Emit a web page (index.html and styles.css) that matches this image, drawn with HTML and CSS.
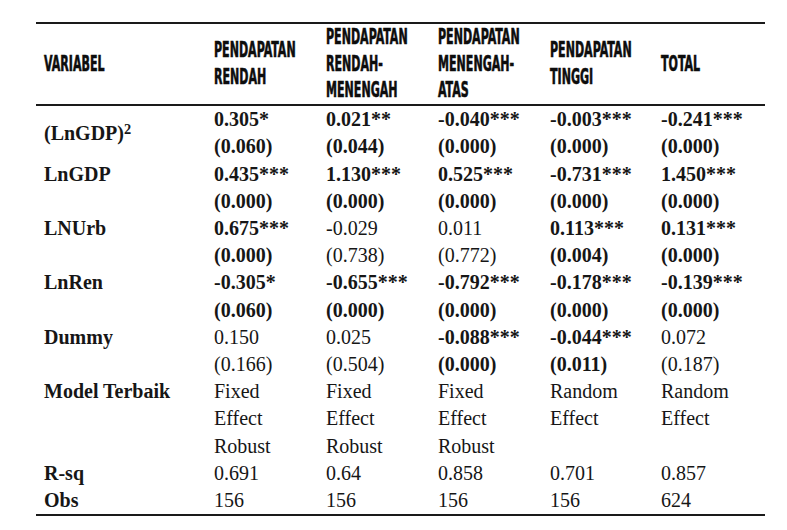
FILE: index.html
```html
<!DOCTYPE html>
<html lang="id">
<head>
<meta charset="utf-8">
<title>Tabel Regresi</title>
<link rel="stylesheet" href="styles.css">
</head>
<body>
<div class="page">
<table class="reg">
  <colgroup>
    <col class="c-var"><col class="c-num"><col class="c-num"><col class="c-num"><col class="c-num4"><col class="c-num">
  </colgroup>
  <thead>
    <tr>
      <th><span class="hd">VARIABEL</span></th>
      <th><span class="hd">PENDAPATAN<br>RENDAH</span></th>
      <th><span class="hd">PENDAPATAN<br>RENDAH-<br>MENENGAH</span></th>
      <th><span class="hd">PENDAPATAN<br>MENENGAH-<br>ATAS</span></th>
      <th><span class="hd">PENDAPATAN<br>TINGGI</span></th>
      <th><span class="hd">TOTAL</span></th>
    </tr>
  </thead>
  <tbody>
    <tr>
      <td class="lbl mid">(LnGDP)<sup>2</sup></td>
      <td><b>0.305*</b><br><b>(0.060)</b></td>
      <td><b>0.021**</b><br><b>(0.044)</b></td>
      <td><b>-0.040***</b><br><b>(0.000)</b></td>
      <td><b>-0.003***</b><br><b>(0.000)</b></td>
      <td><b>-0.241***</b><br><b>(0.000)</b></td>
    </tr>
    <tr>
      <td class="lbl">LnGDP</td>
      <td><b>0.435***</b><br><b>(0.000)</b></td>
      <td><b>1.130***</b><br><b>(0.000)</b></td>
      <td><b>0.525***</b><br><b>(0.000)</b></td>
      <td><b>-0.731***</b><br><b>(0.000)</b></td>
      <td><b>1.450***</b><br><b>(0.000)</b></td>
    </tr>
    <tr>
      <td class="lbl">LNUrb</td>
      <td><b>0.675***</b><br><b>(0.000)</b></td>
      <td>-0.029<br>(0.738)</td>
      <td>0.011<br>(0.772)</td>
      <td><b>0.113***</b><br><b>(0.004)</b></td>
      <td><b>0.131***</b><br><b>(0.000)</b></td>
    </tr>
    <tr>
      <td class="lbl">LnRen</td>
      <td><b>-0.305*</b><br><b>(0.060)</b></td>
      <td><b>-0.655***</b><br><b>(0.000)</b></td>
      <td><b>-0.792***</b><br><b>(0.000)</b></td>
      <td><b>-0.178***</b><br><b>(0.000)</b></td>
      <td><b>-0.139***</b><br><b>(0.000)</b></td>
    </tr>
    <tr>
      <td class="lbl">Dummy</td>
      <td>0.150<br>(0.166)</td>
      <td>0.025<br>(0.504)</td>
      <td><b>-0.088***</b><br><b>(0.000)</b></td>
      <td><b>-0.044***</b><br><b>(0.011)</b></td>
      <td>0.072<br>(0.187)</td>
    </tr>
    <tr>
      <td class="lbl">Model Terbaik</td>
      <td>Fixed<br>Effect<br>Robust</td>
      <td>Fixed<br>Effect<br>Robust</td>
      <td>Fixed<br>Effect<br>Robust</td>
      <td>Random<br>Effect</td>
      <td>Random<br>Effect</td>
    </tr>
    <tr>
      <td class="lbl">R-sq</td>
      <td>0.691</td>
      <td>0.64</td>
      <td>0.858</td>
      <td>0.701</td>
      <td>0.857</td>
    </tr>
    <tr>
      <td class="lbl">Obs</td>
      <td>156</td>
      <td>156</td>
      <td>156</td>
      <td>156</td>
      <td>624</td>
    </tr>
  </tbody>
</table>
</div>
</body>
</html>
```

FILE: styles.css
```css
html, body {
  margin: 0;
  padding: 0;
  background: #ffffff;
}

.page {
  padding: 22px 0 0 36px;
}

.reg {
  width: 729px;
  table-layout: fixed;
  border-collapse: collapse;
  color: #161616;
  font-family: "Liberation Serif", "Times New Roman", serif;
  font-size: 20px;
  line-height: 27.2px;
}

.c-var { width: 170px; }
.c-num { width: 112px; }
.c-num4 { width: 111px; }

.reg thead tr {
  border-top: 2px solid #1a1a1a;
  border-bottom: 2px solid #1a1a1a;
}

.reg th {
  text-align: left;
  vertical-align: middle;
  padding: 0 0 0 8px;
  height: 76px;
  white-space: nowrap;
}

.hd {
  display: inline-block;
  font-family: "DejaVu Sans Condensed", "DejaVu Sans", sans-serif;
  font-stretch: condensed;
  font-weight: 700;
  font-size: 20.5px;
  line-height: 26.5px;
  transform: scaleX(0.6);
  transform-origin: left center;
  color: #0d0d0d;
  -webkit-text-stroke: 0.6px #0d0d0d;
}

.reg tbody tr:last-child {
  border-bottom: 2px solid #1a1a1a;
}

.reg td {
  padding: 0 0 0 8px;
  vertical-align: top;
  white-space: nowrap;
}

.lbl {
  font-weight: 700;
}

.reg td.mid {
  vertical-align: middle;
}

.reg b {
  font-weight: 700;
}

sup {
  font-size: 0.72em;
  line-height: 0;
  vertical-align: 0.42em;
}
```
